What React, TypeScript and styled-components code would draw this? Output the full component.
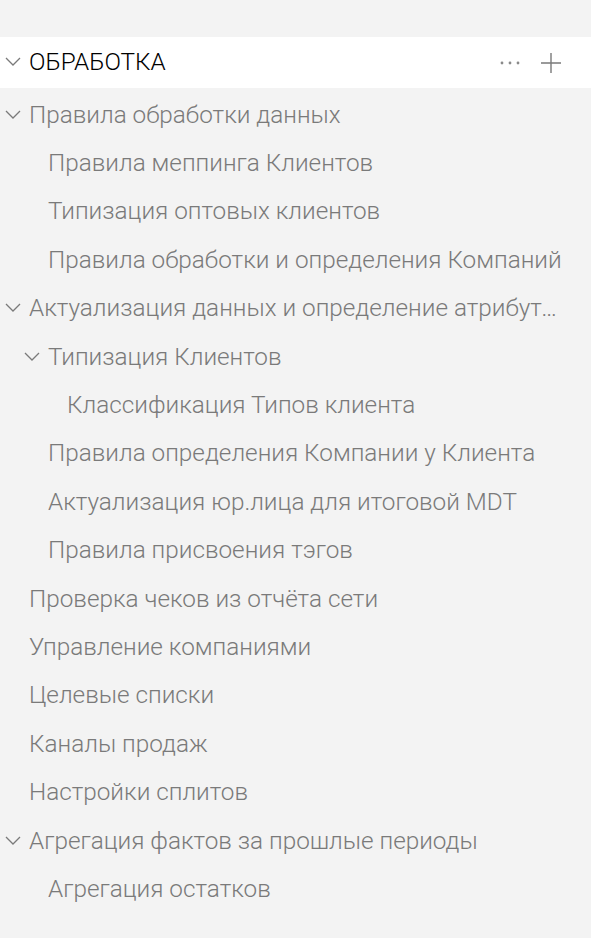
import React from "react";
import styled, { createGlobalStyle } from "styled-components";

const Global = createGlobalStyle`
  html, body { margin: 0; padding: 0; background: #ffffff; }
  body { font-family: Roboto, "Noto Sans", sans-serif; }
`;

const Panel = styled.nav`
  width: 591px;
  min-height: 938px;
  background: #f3f3f3;
  padding-top: 37px;
  box-sizing: border-box;
`;

const Header = styled.div`
  display: flex;
  align-items: center;
  height: 51px;
  background: #ffffff;
  width: 602px;
  padding: 0 40px 2px 5px;
  box-sizing: border-box;
`;

const HeaderTitle = styled.span`
  flex: 1;
  font-family: "Roboto Light", Roboto, sans-serif;
  font-size: 24.3px;
  font-weight: 300;
  color: #000000;
`;

const Actions = styled.div`
  display: flex;
  align-items: center;
  gap: 20px;
  padding-top: 2px;
`;

const List = styled.ul`
  list-style: none;
  margin: 0;
  padding: 2px 0 0;
`;

const Row = styled.li<{ $level: number }>`
  display: flex;
  align-items: center;
  height: 48.4px;
  padding-left: ${(p) => 5 + p.$level * 19}px;
  padding-right: 26px;
  box-sizing: border-box;
  font-family: "Roboto Light", Roboto, sans-serif;
  font-size: 24.3px;
  font-weight: 300;
  color: #7a7a7a;
`;

const ChevronSlot = styled.span`
  width: 24px;
  flex: none;
  display: flex;
  align-items: center;
`;

const Label = styled.span`
  white-space: nowrap;
  overflow: hidden;
  text-overflow: ellipsis;
  min-width: 0;
`;

const Chevron = () => (
  <svg width="16" height="9" viewBox="0 0 16 9" fill="none">
    <path d="M1 1 L8 8 L15 1" stroke="#7a7a7a" strokeWidth="1.3" />
  </svg>
);

type Item = { label: string; level: number; open?: boolean };

const items: Item[] = [
  { label: "Правила обработки данных", level: 0, open: true },
  { label: "Правила меппинга Клиентов", level: 1 },
  { label: "Типизация оптовых клиентов", level: 1 },
  { label: "Правила обработки и определения Компаний", level: 1 },
  { label: "Актуализация данных и определение атрибутов клиентов", level: 0, open: true },
  { label: "Типизация Клиентов", level: 1, open: true },
  { label: "Классификация Типов клиента", level: 2 },
  { label: "Правила определения Компании у Клиента", level: 1 },
  { label: "Актуализация юр.лица для итоговой MDT", level: 1 },
  { label: "Правила присвоения тэгов", level: 1 },
  { label: "Проверка чеков из отчёта сети", level: 0 },
  { label: "Управление компаниями", level: 0 },
  { label: "Целевые списки", level: 0 },
  { label: "Каналы продаж", level: 0 },
  { label: "Настройки сплитов", level: 0 },
  { label: "Агрегация фактов за прошлые периоды", level: 0, open: true },
  { label: "Агрегация остатков", level: 1 },
];

export default function App() {
  return (
    <>
      <Global />
      <Panel>
        <Header>
          <ChevronSlot>
            <Chevron />
          </ChevronSlot>
          <HeaderTitle>ОБРАБОТКА</HeaderTitle>
          <Actions>
            <svg width="20" height="4" viewBox="0 0 20 4">
              <circle cx="2" cy="2" r="1.4" fill="#8a8a8a" />
              <circle cx="10" cy="2" r="1.4" fill="#8a8a8a" />
              <circle cx="18" cy="2" r="1.4" fill="#8a8a8a" />
            </svg>
            <svg width="22" height="22" viewBox="0 0 22 22">
              <path d="M11 1 V21 M1 11 H21" stroke="#7a7a7a" strokeWidth="1.4" />
            </svg>
          </Actions>
        </Header>
        <List>
          {items.map((it, i) => (
            <Row key={i} $level={it.level}>
              <ChevronSlot>{it.open ? <Chevron /> : null}</ChevronSlot>
              <Label>{it.label}</Label>
            </Row>
          ))}
        </List>
      </Panel>
    </>
  );
}
